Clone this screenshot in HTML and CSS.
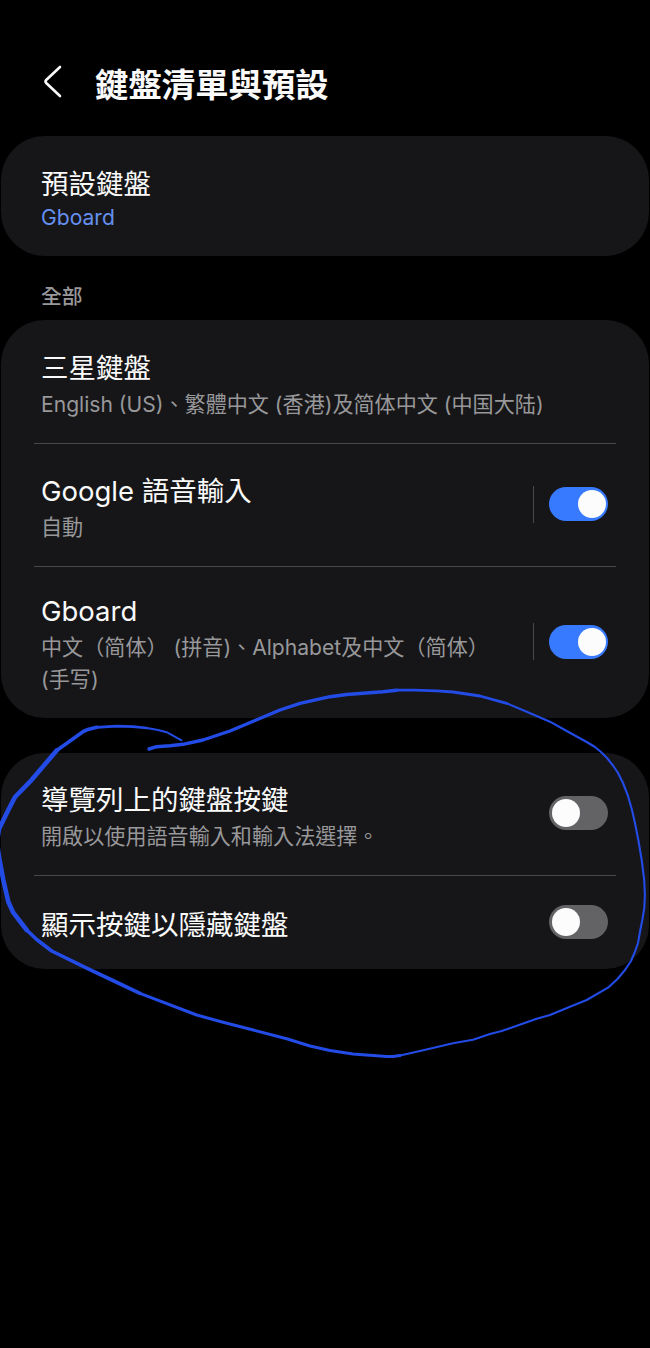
FILE: index.html
```
<!DOCTYPE html>
<html lang="zh-Hant">
<head>
    <meta charset="UTF-8">
    <meta name="viewport" content="width=device-width, initial-scale=1.0">
    <title>鍵盤清單與預設</title>
    <link rel="stylesheet" href="styles.css">
</head>
<body>

<header>
    <svg class="back" width="20" height="34" viewBox="0 0 20 34">
        <path d="M17 2 L3.2 15 Q1.8 16.5 3.2 18 L17 31" />
    </svg>
    <h1>鍵盤清單與預設</h1>
</header>

<section class="card card-default">
    <div class="row">
        <div class="text">
            <h2>預設鍵盤</h2>
            <p class="value">Gboard</p>
        </div>
    </div>
</section>

<h3>全部</h3>

<section class="card card-list">
    <div class="row row-samsung">
        <div class="text">
            <h2>三星鍵盤</h2>
            <p>English (US)、繁體中文 (香港)及简体中文 (中国大陆)</p>
        </div>
    </div>
    <div class="row row-voice">
        <div class="text">
            <h2>Google 語音輸入</h2>
            <p>自動</p>
        </div>
        <div class="separator"></div>
        <div class="switch on"></div>
    </div>
    <div class="row row-gboard">
        <div class="text">
            <h2>Gboard</h2>
            <p>中文（简体） (拼音)、Alphabet及中文（简体）<br>(手写)</p>
        </div>
        <div class="separator"></div>
        <div class="switch on"></div>
    </div>
</section>

<section class="card card-options">
    <div class="row row-nav">
        <div class="text">
            <h2>導覽列上的鍵盤按鍵</h2>
            <p>開啟以使用語音輸入和輸入法選擇。</p>
        </div>
        <div class="switch"></div>
    </div>
    <div class="row row-hide">
        <div class="text">
            <h2>顯示按鍵以隱藏鍵盤</h2>
        </div>
        <div class="switch"></div>
    </div>
</section>

<!-- Trait dessiné à la main autour des options -->
<svg class="scribble" width="650" height="1348" viewBox="0 0 650 1348">
    <polyline stroke-width="3.4" points="149,749 156.7,746.7 170,745.8 183,744.3 203,740 230,731 255,720.5 280,710 300,703.3 330,696.7 346.7,694.5 383,691.7 396.7,690.2" />
    <polyline stroke-width="2.8" points="396.7,690.2 415,690.2 436.7,690.9 453,692 480,696 506.7,703.3" />
    <polyline stroke-width="2.1" points="506.7,703.3 526.7,711.7 550,721.7 566.7,731 586.7,742 595,747 601,752 607,758 613,765.5 618,773 623,783 628,796 632,810 635,823.3 638.5,841 641.7,860 644.2,880 644.9,895 644.3,908 642.3,920 640,931.7 638,943 635,951.7 631,961 625,970 617,979.5 608,987.7 586.7,1000 570,1006.7 550,1015 536.7,1018.7 501.7,1031 490,1034 473,1039.7 453,1043.3 420,1051 400,1055.5" />
    <polyline stroke-width="3" points="400,1055.5 393,1056.5 386.7,1056.5 353,1054 330,1050.5 310,1046 286.7,1038.7 253.3,1030 224,1022.5 196.7,1015 140,993.3" />
    <polyline stroke-width="3.6" points="140,993.3 115,981.5 86.7,968.2 51.7,951 36.7,939.5 26.7,930" />
    <polyline stroke-width="4.6" points="26.7,930 13.3,912.7 8.3,901.7 3.3,880 -1,857 -3,842 -1,829 8.3,810 15,797 30,781.7 56.7,750.5" />
    <polyline stroke-width="3.6" points="56.7,750.5 83.3,731.5 88,729.4 96.7,727.3" />
    <polyline stroke-width="2.7" points="96.7,727.3 116.7,726.2 133,726.7 146.7,728" />
    <polyline stroke-width="2" points="146.7,728 158,730 166.7,732.2 181.5,740.3" />
</svg>

</body>
</html>
```

FILE: styles.css
```
body {
    font-family: Inter, 'Noto Sans CJK TC', sans-serif;
    margin: 0;
    padding: 0;
    min-height: 1348px;
    box-sizing: border-box;
    background-color: #000;
    color: #fafafa;
    position: relative;
}

header {
    display: flex;
    align-items: center;
    height: 136px;
    padding: 28px 0 0 43px;
    box-sizing: border-box;
}

.back {
    fill: none;
    stroke: #fafafa;
    stroke-width: 2.6;
    stroke-linecap: round;
}

h1 {
    margin: 5px 0 0 32px;
    font-size: 33.4px;
    line-height: 44px;
    font-weight: 600;
}

h2 {
    margin: 0;
    font-size: 27.5px;
    line-height: 36px;
    font-weight: 400;
}

h3 {
    margin: 0;
    height: 64px;
    padding: 25px 0 0 41px;
    box-sizing: border-box;
    font-size: 20.8px;
    line-height: 32px;
    font-weight: 500;
    color: #98989a;
}

p {
    margin: 3px 0 0;
    font-size: 21.1px;
    line-height: 32px;
    color: #98989a;
    white-space: nowrap;
}

p.value {
    margin: 0;
    color: #6590f0;
}

.card {
    margin: 0 1px;
    background-color: #161618;
    border-radius: 44px;
}

.row {
    display: flex;
    align-items: center;
    box-sizing: border-box;
    margin: 0 33px;
    padding: 0 8px 0 7px;
}

.row + .row {
    border-top: 1px solid #48484a;
}

.text {
    flex: 1;
    padding-top: 7px;
}

.card-default .row {
    height: 120px;
}

.row-samsung,
.row-voice {
    height: 123px;
}

.row-gboard {
    height: 152px;
}

.row-gboard .text {
    padding-top: 4px;
}

.card-options {
    margin-top: 35px;
}

.row-nav {
    height: 122px;
}

.row-hide {
    height: 94px;
}

.row-hide .text {
    padding-top: 5px;
}

.separator {
    width: 1px;
    height: 37px;
    margin: 0 15px 2px 0;
    background-color: #48484a;
}

.switch {
    display: flex;
    align-items: center;
    width: 59px;
    height: 34px;
    margin-bottom: 2px;
    padding: 0 2px 0 3px;
    box-sizing: border-box;
    border-radius: 17px;
    background-color: #636366;
}

.switch::before {
    content: "";
    width: 28px;
    height: 28px;
    border-radius: 50%;
    background-color: #fcfcfc;
}

.switch.on {
    justify-content: flex-end;
    background-color: #387aff;
}

.scribble {
    position: absolute;
    top: 0;
    left: 0;
    fill: none;
    stroke: #234be6;
    stroke-linecap: round;
    stroke-linejoin: round;
}
```
